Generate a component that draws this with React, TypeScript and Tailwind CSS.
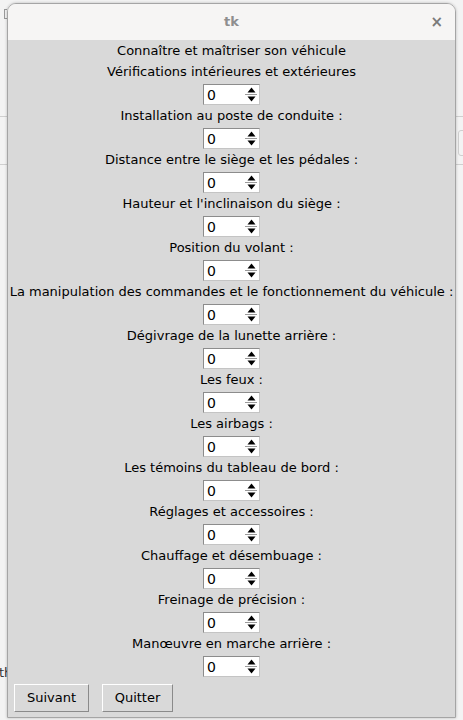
import React from "react";

const fields = [
  "Vérifications intérieures et extérieures",
  "Installation au poste de conduite :",
  "Distance entre le siège et les pédales :",
  "Hauteur et l'inclinaison du siège :",
  "Position du volant :",
  "La manipulation des commandes et le fonctionnement du véhicule :",
  "Dégivrage de la lunette arrière :",
  "Les feux :",
  "Les airbags :",
  "Les témoins du tableau de bord :",
  "Réglages et accessoires :",
  "Chauffage et désembuage :",
  "Freinage de précision :",
  "Manœuvre en marche arrière :",
];

const Spinbox = () => (
  <div className="h-[22px] flex items-start justify-center pt-[1px]">
    <div className="w-[57px] h-[21px] bg-white border border-t-[#8c8c8c] border-l-[#8c8c8c] border-b-[#c4c4c4] border-r-[#c4c4c4] flex items-center">
      <span className="pl-[3px] flex-1 text-[14px] leading-none text-black">0</span>
      <div className="w-[12px] h-[18px] flex flex-col mr-[2px]">
        <div className="h-[9px] flex items-center justify-center border-b border-[#9a9a9a]">
          <svg width="9" height="6" viewBox="0 0 9 6">
            <polygon points="4.5,0.5 8.5,5.5 0.5,5.5" fill="#000" />
          </svg>
        </div>
        <div className="h-[9px] flex items-center justify-center">
          <svg width="9" height="6" viewBox="0 0 9 6">
            <polygon points="0.5,0.5 8.5,0.5 4.5,5.5" fill="#000" />
          </svg>
        </div>
      </div>
    </div>
  </div>
);

const TkButton = ({ label, width }: { label: string; width: string }) => (
  <button
    className={`${width} h-[28px] bg-[#d9d9d9] border border-t-white border-l-white border-b-[#8a8a8a] border-r-[#8a8a8a] text-[13px] text-black`}
  >
    {label}
  </button>
);

export default function App() {
  return (
    <div className="relative w-[463px] h-[720px] bg-[#f3f3f3] overflow-hidden font-['DejaVu_Sans',sans-serif]">
      {/* desktop behind the window */}
      <div className="absolute left-0 top-[116px] w-[463px] h-px bg-[#cfcfcf]" />
      <div className="absolute left-0 top-[164px] w-[463px] h-px bg-[#cfcfcf]" />
      <div className="absolute left-[458px] top-[130px] w-[6px] h-[26px] rounded-l-[3px] border border-[#cfcfcf]" />
      <div className="absolute left-[4px] top-[9px] w-[3px] h-[10px] border border-r-0 border-[#9a9a9a]" />
      <span className="absolute left-[-1px] top-[663px] text-[13px] text-[#333]">th</span>

      <div className="relative ml-[7px] mt-[3px] w-[449px] h-[715px] flex flex-col rounded-t-[9px] border border-[#a5a5a5] shadow-[0_0_3px_rgba(0,0,0,0.25)] overflow-hidden">
        <div className="h-[36px] bg-[#f6f5f4] flex items-center justify-center relative">
          <span className="text-[13px] font-bold text-[#8e8e8e]">tk</span>
          <span className="absolute right-[12px] top-[8px] text-[15px] font-bold text-[#7a7a7a] leading-[20px]">×</span>
        </div>
        <div className="flex-1 bg-[#d9d9d9] flex flex-col text-[13px] text-black">
          <div className="h-[21px] leading-[21px] text-center whitespace-nowrap">
            Connaître et maîtriser son véhicule
          </div>
          {fields.map((f) => (
            <div key={f}>
              <div className="h-[22px] leading-[22px] text-center whitespace-nowrap">{f}</div>
              <Spinbox />
            </div>
          ))}
          <div className="flex gap-[13px] pl-[6px] mt-[7px]">
            <TkButton label="Suivant" width="w-[75px]" />
            <TkButton label="Quitter" width="w-[71px]" />
          </div>
        </div>
      </div>
    </div>
  );
}
